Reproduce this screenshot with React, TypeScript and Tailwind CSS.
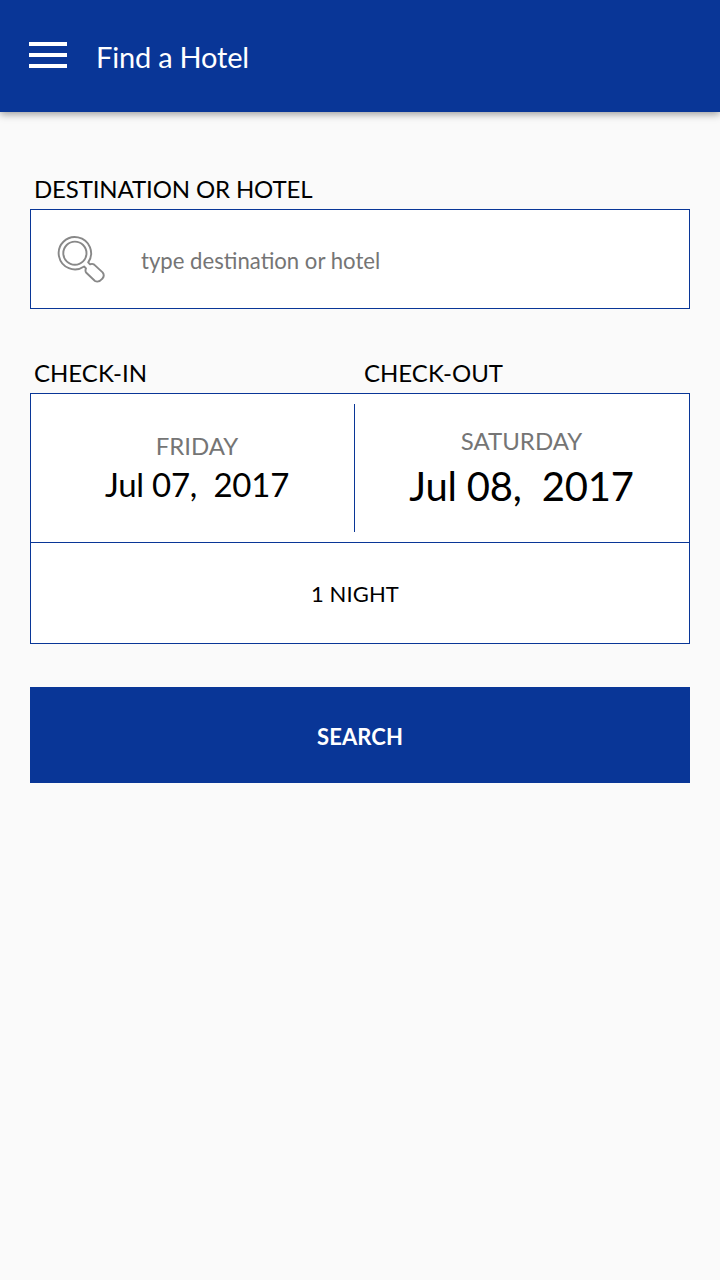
import React from "react";

export default function FindHotelPage() {
    return (
        <div className="min-h-screen bg-[#fafafa] font-['Lato',sans-serif] text-black">
            {/* Toolbar */}
            <header className="flex h-28 items-center bg-[#093697] pl-[29px] shadow-[0_2px_8px_rgba(0,0,0,0.4)]">
                <div className="flex flex-col gap-[7px] pb-0.5">
                    <span className="h-1 w-[38px] bg-white"></span>
                    <span className="h-1 w-[38px] bg-white"></span>
                    <span className="h-1 w-[38px] bg-white"></span>
                </div>
                <h1 className="ml-[29px] pt-0.5 text-[29px] leading-9 tracking-[-0.2px] text-white">Find a Hotel</h1>
            </header>

            <main className="px-[30px] pt-[61px]">
                {/* Destination */}
                <label className="block h-9 pl-1 text-2xl leading-8 tracking-[-0.13px]">DESTINATION OR HOTEL</label>
                <div className="flex h-[100px] items-center border border-[#093697] bg-white pl-[26px]">
                    <svg className="h-12 w-12" viewBox="0 0 48 48" fill="none" stroke="#888888" strokeWidth="1.9" strokeLinejoin="round">
                        <circle cx="17.9" cy="18.2" r="11.6" />
                        <path d="M27.1 31.5A16.2 16.2 0 1 1 31.2 27.4L33 29.4Q35.2 28.2 37.2 29.6L45.6 37.4Q48 40.5 45.4 43.6Q41.6 48 38 46L29.3 37.8Q27.8 36 29 33.4Z" />
                    </svg>
                    <span className="ml-9 pt-[3px] text-[22.15px] text-[#757575]">type destination or hotel</span>
                </div>

                {/* Dates */}
                <div className="mt-12 flex h-9 pl-1 text-2xl leading-8">
                    <span className="w-[330px]">CHECK-IN</span>
                    <span>CHECK-OUT</span>
                </div>
                <div className="border border-[#093697] bg-white">
                    <div className="flex h-[149px] border-b border-[#093697] py-[10px]">
                        <div className="flex w-[324px] flex-col items-center border-r border-[#093697] pt-[26px] pl-[9px]">
                            <span className="text-2xl leading-8 text-[#757575]">FRIDAY</span>
                            <span className="text-[33px] leading-[44px] tracking-[-0.25px] whitespace-pre">Jul 07,  2017</span>
                        </div>
                        <div className="flex flex-1 flex-col items-center pt-[21px] pr-px">
                            <span className="text-2xl leading-8 text-[#757575]">SATURDAY</span>
                            <span className="text-[40px] leading-[58px] tracking-[-0.2px] whitespace-pre">Jul 08,  2017</span>
                        </div>
                    </div>
                    <div className="flex h-[100px] items-center justify-center pr-[10px] text-[22px] tracking-[0.1px]">1 NIGHT</div>
                </div>

                <button className="mt-[43px] h-24 w-full bg-[#093697] pt-0.5 text-[22px] font-bold tracking-[0.1px] text-white">SEARCH</button>
            </main>
        </div>
    );
}
